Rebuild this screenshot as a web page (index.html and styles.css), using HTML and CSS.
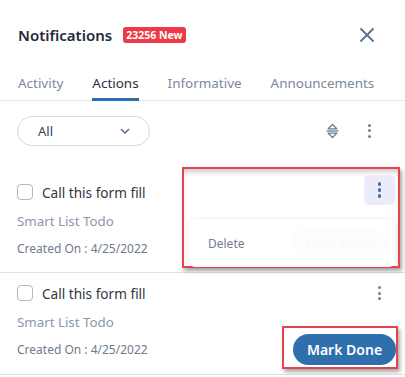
FILE: index.html
```html
<!DOCTYPE html>
<html>
<head>
<meta charset="utf-8">
<link rel="stylesheet" href="styles.css">
</head>
<body>
<div class="panel">
  <div class="header">
    <div class="title">Notifications</div>
    <span class="badge">23256 New</span>
    <div class="spacer"></div>
    <svg class="close" width="16" height="16" viewBox="0 0 16 16"><path d="M1.5 1.5 L14.5 14.5 M14.5 1.5 L1.5 14.5" stroke="#5f7490" stroke-width="2" fill="none"/></svg>
  </div>
  <div class="tabs">
    <div class="tab">Activity</div>
    <div class="tab active">Actions</div>
    <div class="tab">Informative</div>
    <div class="tab">Announcements</div>
  </div>
  <div class="toolbar">
    <div class="filter">
      <span>All</span>
      <svg width="10" height="6" viewBox="0 0 10 6"><path d="M1 1 L5 5 L9 1" stroke="#5b7290" stroke-width="1.6" fill="none"/></svg>
    </div>
    <div class="spacer"></div>
    <svg class="sort" width="13" height="16" viewBox="0 0 13 16"><path d="M2.2 5.8 L6.5 1.5 L10.8 5.8 Z M2.2 10.2 L6.5 14.5 L10.8 10.2 Z" stroke="#6c7f9a" stroke-width="1.3" fill="none" stroke-linejoin="round"/><path d="M0.5 8 H12.5" stroke="#6c7f9a" stroke-width="1.3"/></svg>
    <div class="kebab"><i></i><i></i><i></i></div>
  </div>
  <div class="list">
    <div class="item">
      <div class="row1">
        <span class="check"></span>
        <span class="name">Call this form fill</span>
      </div>
      <div class="sub">Smart List Todo</div>
      <div class="row3"><span class="date">Created On : 4/25/2022</span></div>
      <div class="annot menu-annot">
        <div class="menu-top"><div class="kebab-btn"><i></i><i></i><i></i></div></div>
        <div class="menu-card"><span>Delete</span><span class="ghost">Mark Done</span></div>
      </div>
    </div>
    <div class="item">
      <div class="row1">
        <span class="check"></span>
        <span class="name">Call this form fill</span>
        <div class="spacer"></div>
        <div class="kebab item-kebab"><i></i><i></i><i></i></div>
      </div>
      <div class="sub">Smart List Todo</div>
      <div class="row3">
        <span class="date">Created On : 4/25/2022</span>
        <div class="spacer"></div>
      </div>
      <div class="annot btn-annot"><button class="done">Mark Done</button></div>
    </div>
  </div>
</div>
</body>
</html>
```
FILE: styles.css
```css
* { box-sizing: border-box; }
html, body { margin: 0; padding: 0; background: #fff; }
body { font-family: "Noto Sans", "Open Sans", sans-serif; color: #2b323e; width: 405px; height: 377px; overflow: hidden; }
.panel { width: 405px; }
.spacer { flex: 1; }

.header { display: flex; align-items: center; height: 30px; margin-top: 20px; padding: 0 30px 0 18px; }
.title { font-size: 15px; font-weight: 600; color: #252c38; }
.badge { margin-left: 11px; background: #ec3a49; color: #fff; font-size: 10.5px; font-weight: 700; height: 16px; line-height: 16px; padding: 0 3px; border-radius: 3px; }
.close { display: block; }

.tabs { display: flex; gap: 29px; margin-top: 22px; padding: 0 18px; border-bottom: 1px solid #e3e5ea; height: 29px; }
.tab { font-size: 13.45px; color: #7c889b; line-height: 22px; height: 29px; }
.tab.active { color: #2a313d; border-bottom: 3px solid #2f6fb0; }

.toolbar { display: flex; align-items: center; padding: 14px 34px 0 17px; height: 45px; }
.filter { width: 133px; height: 30px; border: 1px solid #d6d9df; border-radius: 15px; display: flex; align-items: center; justify-content: space-between; padding: 0 19px 0 20px; font-size: 13px; color: #3a4250; }
.sort { display: block; margin-right: 29px; }
.kebab { display: flex; flex-direction: column; gap: 2.5px; width: 3px; }
.kebab i { display: block; width: 3px; height: 3px; border-radius: 50%; background: #6c7f9a; }

.list { margin-top: 25px; }
.item { position: relative; height: 102px; border-bottom: 1px solid #dfe2e7; padding: 12px 24px 0 17px; }
.item + .item { height: 102px; padding-top: 11px; }
.row1 { display: flex; align-items: center; height: 18px; }
.check { width: 16px; height: 16px; border: 1.5px solid #b0b7c2; border-radius: 4px; margin-right: 9px; }
.name { font-size: 13.6px; color: #2f3642; }
.sub { font-size: 13.3px; color: #8a97ab; margin-top: 11px; line-height: 18px; }
.row3 { display: flex; align-items: center; margin-top: 8px; height: 20px; }
.date { font-size: 12px; color: #6f7b8d; }

.annot { position: absolute; border: 2px solid #e8434d; box-shadow: 2px 3px 4px rgba(0,0,0,0.35); background: #fff; }
.menu-annot { left: 182px; top: -4px; width: 218px; height: 101px; box-shadow: 2px 3px 4px rgba(0,0,0,0.35), inset 0 5px 6px -3px rgba(0,0,0,0.25); padding: 6px 3px 0 5px; }
.menu-top { display: flex; justify-content: flex-end; height: 44px; }
.kebab-btn { width: 31px; height: 30px; background: #ebebf9; border-radius: 5px; display: flex; flex-direction: column; align-items: center; justify-content: center; gap: 2.5px; }
.kebab-btn i { display: block; width: 3.5px; height: 3.5px; border-radius: 50%; background: #3c6eae; }
.menu-card { height: 48px; background: #fff; border-radius: 6px; box-shadow: 0 0 5px rgba(60,60,120,0.10); display: flex; align-items: center; justify-content: space-between; padding: 0 8px 0 19px; font-size: 12px; color: #707c8f; }
.ghost { color: #fafafc; background: #fdfdfe; border-radius: 14px; padding: 6px 14px; font-size: 13px; }

.btn-annot { left: 282px; top: 53px; width: 116px; height: 43px; padding: 6px 2px 0 9px; }
.done { width: 103px; height: 31px; border: none; border-radius: 16px; background: #2f6fae; color: #fff; font-family: inherit; font-size: 14px; font-weight: 600; padding: 0; }
```
